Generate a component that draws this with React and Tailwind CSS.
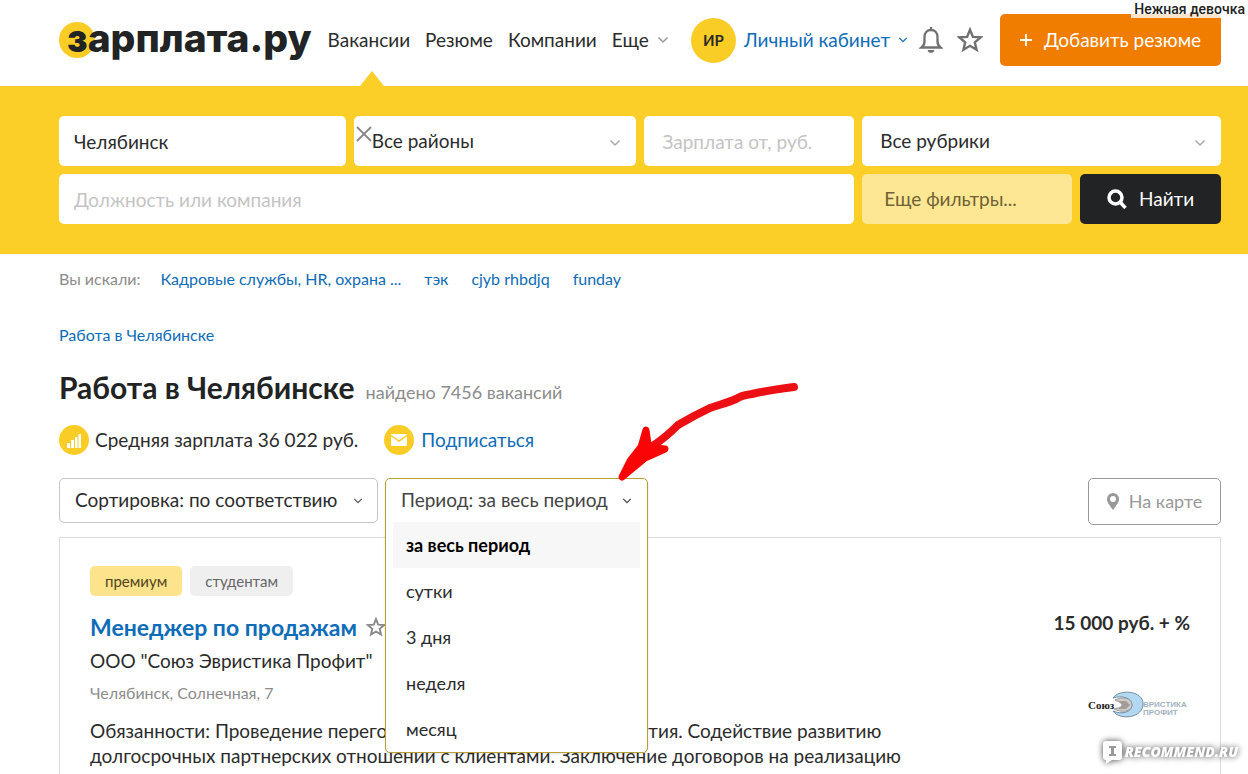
import { useState } from "react";

const navLinks = ["Вакансии", "Резюме", "Компании"];

const recentSearches = [
  "Кадровые службы, HR, охрана ...",
  "тэк",
  "cjyb rhbdjq",
  "funday"
];

const periods = ["за весь период", "сутки", "3 дня", "неделя", "месяц"];

function Chevron({ className }) {
  return (
    <svg viewBox="0 0 12 8" className={className} fill="none" stroke="currentColor" strokeWidth="1.5" aria-hidden="true">
      <path d="M1.5 1.5 6 6l4.500-4.500" />
    </svg>
  );
}

function StarIcon({ className }) {
  return (
    <svg viewBox="0 0 24 24" className={className} fill="none" stroke="currentColor" strokeWidth="2.200" aria-hidden="true">
      <path d="m12 2.500 2.700 6.600 7.100.5-5.400 4.600 1.700 6.900L12 17.400l-6.100 3.700 1.700-6.900L2.200 9.600l7.100-.5z" />
    </svg>
  );
}

function BellIcon() {
  return (
    <svg viewBox="0 0 24 28" className="h-7 w-6" fill="none" stroke="currentColor" strokeWidth="2.300" aria-hidden="true">
      <path d="M12 1v3M2.500 21.500c2-1.500 3-3 3-6V11C5.500 7 8 4 12 4s6.500 3 6.500 7v4.500c0 3 1 4.500 3 6z" />
      <path d="M8.500 24h7c-.5 2-1.800 2.800-3.500 2.800S9 26 8.500 24z" fill="currentColor" stroke="none" />
    </svg>
  );
}

function Header() {
  return (
    <header className="flex h-[86px] items-center pr-[27px] pb-[6px] pl-[59px] text-[19px] whitespace-nowrap text-[#2b2b2b]">
      <a href="#" className="relative mr-4 flex h-[38px] items-center pl-2 font-[Inter,sans-serif] text-[39px] font-extrabold text-[#212324]">
        <span className="absolute left-0 size-9 rounded-full bg-[#facc26]" />
        <span className="relative pb-1">зарплата.ру</span>
      </a>
      <nav className="flex items-center gap-[15px]">
        {navLinks.map((link) => (
          <a key={link} href="#" className="relative">
            {link}
            {link === "Вакансии" ? (
              <span className="absolute top-[45px] left-8 border-x-[12px] border-b-[15px] border-x-transparent border-b-[#fbce28]" />
            ) : null}
          </a>
        ))}
        <button type="button" className="flex items-center gap-2">
          Еще
          <Chevron className="h-2 w-3 text-[#999]" />
        </button>
      </nav>
      <div className="ml-auto flex items-center">
        <span className="flex size-[45px] items-center justify-center rounded-full bg-[#facc26] text-[15px] font-bold">ИР</span>
        <button type="button" className="ml-2 flex items-center gap-2 text-[#0e6cb8]">
          Личный кабинет
          <Chevron className="h-2 w-[10px]" />
        </button>
        <button type="button" aria-label="Уведомления" className="ml-[11px] text-[#707070]">
          <BellIcon />
        </button>
        <button type="button" aria-label="Избранное" className="ml-[14px] text-[#707070]">
          <StarIcon className="size-[26px]" />
        </button>
        <button type="button" className="ml-[17px] flex h-[52px] w-[221px] items-center justify-center gap-3 rounded-[5px] bg-[#f07d00] text-white">
          <svg viewBox="0 0 12 12" className="size-3" stroke="currentColor" strokeWidth="1.800" aria-hidden="true">
            <path d="M6 0v12M0 6h12" />
          </svg>
          Добавить резюме
        </button>
      </div>
    </header>
  );
}

function SearchForm() {
  return (
    <form
      onSubmit={(e) => e.preventDefault()}
      className="grid grid-cols-[287fr_283fr_210fr_210fr_141fr] gap-2 bg-[#fbce28] py-[30px] pr-[27px] pl-[59px] text-[19px] text-[#2b2b2b]"
    >
      <input aria-label="Город" defaultValue="Челябинск" className="h-[50px] w-full min-w-0 rounded-[5px] bg-white px-[15px] outline-none" />
      <div className="relative">
        <select aria-label="Район" className="h-[50px] w-full appearance-none rounded-[5px] bg-white px-[18px] outline-none">
          <option>Все районы</option>
        </select>
        <button type="button" aria-label="Очистить город" className="absolute top-[10px] left-[2px] text-[#888]">
          <svg viewBox="0 0 16 16" className="size-4" stroke="currentColor" strokeWidth="1.800" aria-hidden="true">
            <path d="m1 1 14 14M15 1 1 15" />
          </svg>
        </button>
        <Chevron className="pointer-events-none absolute top-[23px] right-[15px] h-2 w-3 text-[#aaa]" />
      </div>
      <input aria-label="Зарплата от" placeholder="Зарплата от, руб." className="h-[50px] w-full min-w-0 rounded-[5px] bg-white px-[18px] outline-none placeholder:text-[#c4c4c4]" />
      <div className="relative col-span-2">
        <select aria-label="Рубрика" className="h-[50px] w-full appearance-none rounded-[5px] bg-white px-[18px] outline-none">
          <option>Все рубрики</option>
        </select>
        <Chevron className="pointer-events-none absolute top-[23px] right-[15px] h-2 w-3 text-[#aaa]" />
      </div>
      <input
        aria-label="Должность или компания"
        placeholder="Должность или компания"
        className="col-span-3 h-[50px] w-full rounded-[5px] bg-white px-[15px] outline-none placeholder:text-[#c4c4c4]"
      />
      <button type="button" className="h-[50px] rounded-[5px] bg-[#fde694] px-[22px] text-left text-[#6f6234]">
        Еще фильтры...
      </button>
      <button type="submit" className="flex h-[50px] items-center justify-center gap-3 rounded-[5px] bg-[#212324] text-white">
        <svg viewBox="0 0 20 20" className="size-5" fill="none" stroke="currentColor" strokeWidth="3.500" aria-hidden="true">
          <circle cx="8.500" cy="8.500" r="6.500" />
          <path d="m13 13 5.500 6" />
        </svg>
        Найти
      </button>
    </form>
  );
}

function PeriodSelect() {
  const [selected, setSelected] = useState(periods[0]);
  const [open, setOpen] = useState(true);

  return (
    <div className="relative h-[45px] w-[263px]">
      <div className="absolute inset-x-0 top-0 z-10 rounded-[5px] border border-[#b8a034] bg-white shadow-sm">
        <button
          type="button"
          aria-expanded={open}
          onClick={() => setOpen(!open)}
          className="flex h-[43px] w-full items-center justify-between px-[15px] text-[#444]"
        >
          Период: {selected}
          <Chevron className="h-2 w-[10px]" />
        </button>
        {open ? (
          <ul role="listbox" aria-label="Период" className="px-[7px] text-[18px] text-[#2b2b2b]">
            {periods.map((period) => (
              <li
                key={period}
                role="option"
                aria-selected={period === selected}
                onClick={() => setSelected(period)}
                className="flex h-[46px] items-center px-[13px] aria-selected:bg-[#f7f7f7] aria-selected:font-bold aria-selected:text-black"
              >
                {period}
              </li>
            ))}
          </ul>
        ) : null}
      </div>
      <svg viewBox="0 0 180 102" className="pointer-events-none absolute -top-24 left-[232px] z-20 h-[102px] w-[180px] overflow-visible" aria-hidden="true">
        <g strokeWidth="7" strokeLinecap="round" strokeLinejoin="round">
          <path d="M177 5c-15 2-30 4-42 7-7 1-12 2-16 5-9 4-18 6-26 9l-16 8-16 9C52 52 46 57 37 63" fill="none" stroke="#ec1014" strokeWidth="8" />
          <path d="M5 95 13 79 24 65l5-17 2 14 7 4 10 1-11 5-9 4z" fill="#fa0505" stroke="#fa0505" />
        </g>
      </svg>
    </div>
  );
}

function Toolbar() {
  return (
    <div className="mt-[23px] flex items-start gap-[7px] text-[19px] text-[#2b2b2b]">
      <div className="relative">
        <select aria-label="Сортировка" className="h-[45px] w-[319px] appearance-none rounded-[5px] border border-[#c6c6c6] bg-white px-[15px] outline-none">
          <option>Сортировка: по соответствию</option>
        </select>
        <Chevron className="pointer-events-none absolute top-[19px] right-[15px] h-2 w-[10px] text-[#555]" />
      </div>
      <PeriodSelect />
      <button type="button" className="ml-auto flex h-[47px] w-[133px] items-center justify-center gap-[10px] rounded-[5px] border border-[#999] text-[18px] text-[#999]">
        <svg viewBox="0 0 12 17" className="h-[17px] w-3" fill="currentColor" fillRule="evenodd" aria-hidden="true">
          <path d="M6 0a6 6 0 0 0-6 6c0 4 3 6.500 6 11 3-4.500 6-7 6-11a6 6 0 0 0-6-6zm0 3a3 3 0 1 1 0 6 3 3 0 0 1 0-6z" />
        </svg>
        На карте
      </button>
    </div>
  );
}

function CompanyLogo() {
  return (
    <div className="relative flex h-[30px] w-[102px] items-center font-['Liberation_Serif',serif]">
      <svg viewBox="0 0 102 30" className="absolute inset-0" aria-hidden="true">
        <path d="M25 8c6-9 30-8 30 6S32 31 25 21c9 4 19 1 19-6S34 5 25 8z" fill="#b3d9f2" stroke="#6f8da1" />
        <path d="M27 10c7-4 17-2 17 5s-11 8-18 4l8-2v-4z" fill="#cfcbc9" stroke="#8a8f93" strokeWidth=".8" />
        <path d="M30 11h8l4 4-4 4h-8l4-4z" fill="#a39d9a" />
      </svg>
      <span className="relative w-[55px] text-[11px] font-bold text-[#222]">Союз</span>
      <span className="relative pt-2 font-['Liberation_Sans',sans-serif] text-[8px] leading-[8px] font-bold text-[#9fb2be]">
        ВРИСТИКА
        <br />
        ПРОФИТ
      </span>
    </div>
  );
}

function VacancyCard() {
  return (
    <article className="mt-3 flex flex-1 items-start justify-between border border-b-0 border-[#ddd] px-[30px] pt-7 text-[#2b2b2b]">
      <div className="max-w-[840px]">
        <div className="flex gap-2 text-[15px]">
          <span className="flex h-[30px] items-center rounded-[5px] bg-[#fde38c] px-[15px] text-[#4f4520]">премиум</span>
          <span className="flex h-[30px] items-center rounded-[5px] bg-[#efefef] px-[15px] text-[#666]">студентам</span>
        </div>
        <h2 className="mt-4 flex h-[30px] items-center gap-[9px] text-[23px] font-bold text-[#0e6cb8]">
          <a href="#">Менеджер по продажам</a>
          <StarIcon className="size-5 text-[#888]" />
        </h2>
        <p className="mt-1 text-[19px] leading-[30px]">ООО "Союз Эвристика Профит"</p>
        <p className="mt-1 text-[16px] leading-[26px] text-[#8c8c8c]">Челябинск, Солнечная, 7</p>
        <p className="mt-3 text-[19px] leading-[25px]">
          Обязанности: Проведение переговоров, презентация предприятия. Содействие развитию
          долгосрочных партнерских отношений с клиентами. Заключение договоров на реализацию
        </p>
      </div>
      <div className="flex shrink-0 flex-col items-end pt-[46px]">
        <p className="text-[19px] leading-[22px] font-bold">15 000 руб. + %</p>
        <div className="mt-14">
          <CompanyLogo />
        </div>
      </div>
    </article>
  );
}

export default function App() {
  return (
    <div className="relative flex min-h-screen flex-col bg-white font-[Lato,sans-serif]">
      <Header />
      <SearchForm />
      <main className="flex flex-1 flex-col pr-[27px] pl-[59px]">
        <div className="mt-[14px] flex text-[16px] leading-[22px] text-[#0e6cb8]">
          <span className="mr-5 text-[#8c8c8c]">Вы искали:</span>
          <div className="flex gap-[23px]">
            {recentSearches.map((item) => (
              <a key={item} href="#">{item}</a>
            ))}
          </div>
        </div>
        <a href="#" className="mt-[34px] self-start text-[16px] leading-[22px] text-[#0e6cb8]">
          Работа в Челябинске
        </a>
        <div className="mt-[23px] flex items-baseline gap-[11px]">
          <h1 className="text-[30px] leading-9 font-bold text-[#212324]">Работа в Челябинске</h1>
          <span className="text-[18px] text-[#8c8c8c]">найдено 7456 вакансий</span>
        </div>
        <div className="mt-[19px] flex h-[30px] items-center text-[19px] text-[#2b2b2b]">
          <svg viewBox="0 0 30 30" className="mr-[6px] size-[30px]" aria-hidden="true">
            <circle cx="15" cy="15" r="15" fill="#facc26" />
            <path d="M8 18h3v5H8zM12 15h3v8h-3zM16 12h2.500v11H16zM19.500 9H22v14h-2.500z" fill="#fff" />
          </svg>
          Средняя зарплата 36 022 руб.
          <a href="#" className="ml-[26px] flex items-center gap-[7px] text-[#0e6cb8]">
            <svg viewBox="0 0 30 30" className="size-[30px]" aria-hidden="true">
              <circle cx="15" cy="15" r="15" fill="#facc26" />
              <rect x="7" y="9" width="16" height="12" rx="1" fill="#fff" />
              <path d="m7 10.500 8 5.500 8-5.500" fill="none" stroke="#facc26" strokeWidth="1.500" />
            </svg>
            Подписаться
          </a>
        </div>
        <Toolbar />
        <VacancyCard />
      </main>
      <span className="absolute top-0 right-0 bg-white/80 px-[3px] font-[Roboto,sans-serif] text-[14px] leading-[18px] font-medium text-[#222]">
        Нежная девочка
      </span>
      <div className="absolute right-[10px] bottom-2 flex h-7 items-center gap-[2px] drop-shadow-[0_0_3px_#444]">
        <svg viewBox="0 0 21 24" className="h-6 w-[21px]" aria-hidden="true">
          <path d="M4 1h13a3 3 0 0 1 3 3v13a3 3 0 0 1-3 3h-7l-6 4v-4a3 3 0 0 1-3-3V4a3 3 0 0 1 3-3z" fill="#fff" />
          <path d="M7 6h7v2h-2v6h2v2H7v-2h2V8H7z" fill="#999" />
        </svg>
        <span className="font-['Open_Sans',sans-serif] text-[14px] leading-5 font-extrabold text-white italic">RECOMMEND.RU</span>
      </div>
    </div>
  );
}
